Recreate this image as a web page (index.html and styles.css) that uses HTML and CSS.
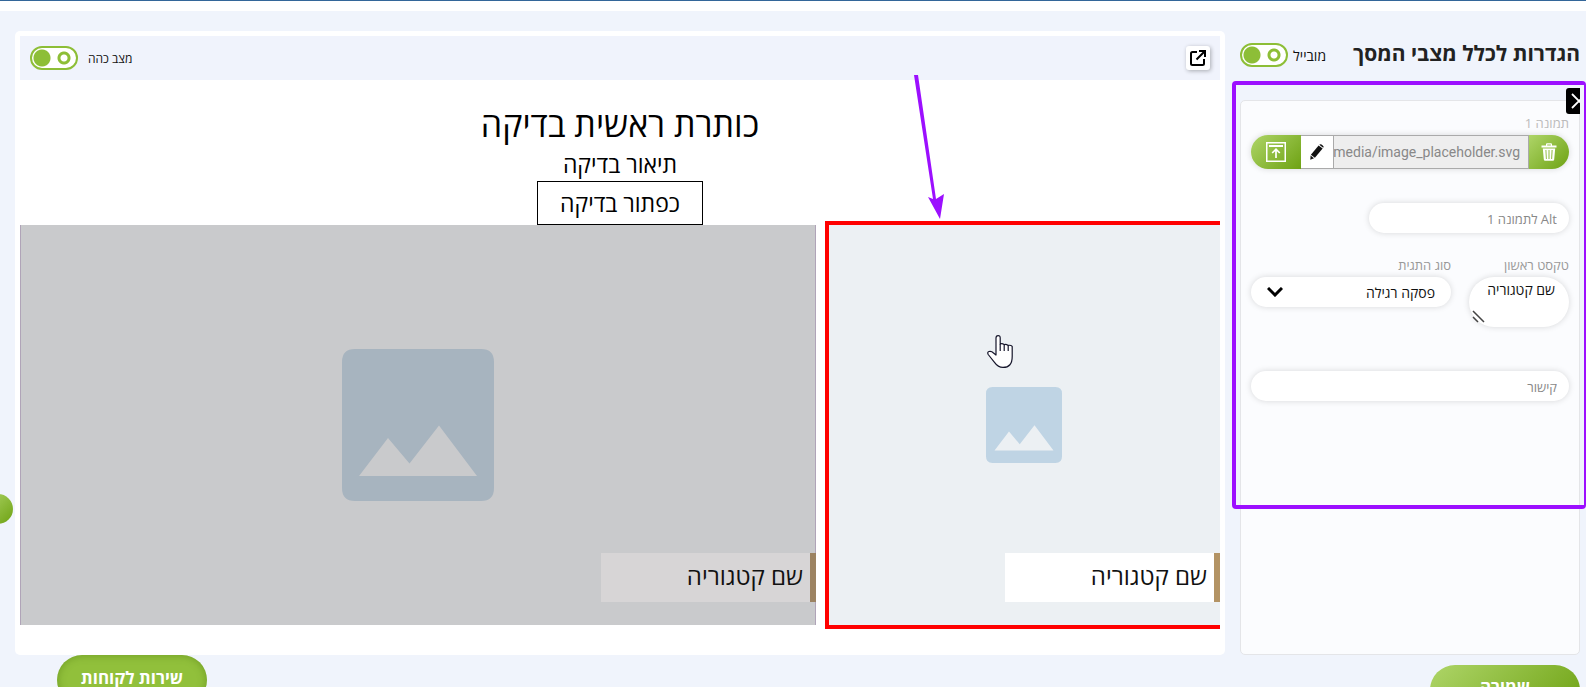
FILE: index.html
```html
<!DOCTYPE html>
<html lang="he" dir="rtl">
<head>
  <meta charset="UTF-8">
  <meta name="viewport" content="width=device-width, initial-scale=1.0">
  <title>הגדרות לכלל מצבי המסך</title>
  <link rel="stylesheet" href="styles.css">
</head>
<body>
  <div class="topbar"></div>

  <main class="editor">
    <aside class="sidebar">
      <div class="sidebar-head">
        <h1 class="title">הגדרות לכלל מצבי המסך</h1>
        <label class="switch">
          <span>מובייל</span>
          <input type="checkbox" class="toggle">
        </label>
      </div>

      <form class="panel">
        <label class="label label-light" for="image">תמונה 1</label>
        <div class="file-row">
          <button type="button" class="file-btn trash" aria-label="מחיקה">
            <svg width="16" height="18" viewBox="0 0 16 18" fill="#fff">
              <path d="M5 1.5Q5 .3 6 .3h4q1 0 1 1.2v1h4.5v2H.5v-2H5zM6.2 1.4v1.1h3.6V1.4z"/>
              <path d="M1.8 5.5h12.4l-1 11q-.1 1.2-1.3 1.2H4.1q-1.2 0-1.3-1.2zM4.4 7l.5 9h.9l-.4-9zM7.5 7v9h1V7zM10.6 7l-.4 9h.9l.5-9z" fill-rule="evenodd"/>
            </svg>
          </button>
          <input type="text" id="image" class="file-name" value="media/image_placeholder.svg" readonly>
          <button type="button" class="file-btn edit" aria-label="עריכה">
            <svg width="14" height="16" viewBox="0 0 14 16" fill="#111">
              <path d="M8.6 1.6l4 3L4.9 13.8l-4-3z"/>
              <path d="M9.3.8q.9-1.1 2.2-.2l1.5 1.2q1 .9.2 2z"/>
              <path d="M.6 11.6l3.4 2.7L.3 15.8z"/>
            </svg>
          </button>
          <button type="button" class="file-btn upload" aria-label="העלאה">
            <svg width="20" height="20" viewBox="0 0 20 20" fill="none" stroke="#fff">
              <rect x=".75" y=".75" width="18.5" height="18.5" stroke-width="1.5"/>
              <path d="M3 4h14" stroke-width="2"/>
              <path d="M10 16V7.5M6.2 11L10 7.2l3.8 3.8" stroke-width="1.7"/>
            </svg>
          </button>
        </div>

        <input type="text" class="field alt" placeholder="Alt לתמונה 1" aria-label="Alt לתמונה 1">

        <div class="columns">
          <div class="col-text">
            <label class="label" for="text">טקסט ראשון</label>
            <textarea id="text" class="field area">שם קטגוריה</textarea>
            <svg class="grip" width="13" height="13" viewBox="0 0 13 13" stroke="#444" stroke-width="1.5">
              <path d="M1 1l11 11M1 7l5 5"/>
            </svg>
          </div>
          <div class="col-tag">
            <label class="label" for="tag">סוג התגית</label>
            <div class="select-box">
              <select id="tag" class="field select">
                <option>פסקה רגילה</option>
              </select>
              <svg class="chevron" width="16" height="10" viewBox="0 0 16 10" fill="none" stroke="#000" stroke-width="3">
                <path d="M1 1l7 7 7-7"/>
              </svg>
            </div>
          </div>
        </div>

        <input type="text" class="field" placeholder="קישור" aria-label="קישור">
      </form>

      <button type="button" class="close" aria-label="סגירה">
        <svg width="9" height="16" viewBox="0 0 9 16" fill="none" stroke="#fff" stroke-width="1.8">
          <path d="M1 1l14 14M1 15L15 1"/>
        </svg>
      </button>
      <button type="button" class="save">שמירה</button>
      <div class="marker"></div>
    </aside>

    <section class="preview">
      <div class="preview-head">
        <a href="#" class="open" aria-label="פתיחה בחלון חדש">
          <svg width="16" height="16" viewBox="0 0 16 16" fill="none" stroke="#000" stroke-width="2">
            <path d="M7 2H2.500Q1 2 1 3.500v10Q1 15 2.500 15h10q1.500 0 1.500-1.500V9M9 1h6v6M15 1L6.500 9.500"/>
          </svg>
        </a>
        <label class="switch switch-small">
          <span>מצב כהה</span>
          <input type="checkbox" class="toggle">
        </label>
      </div>

      <div class="intro">
        <h2 class="intro-title">כותרת ראשית בדיקה</h2>
        <p class="intro-text">תיאור בדיקה</p>
        <a href="#" class="intro-btn">כפתור בדיקה</a>
      </div>

      <div class="slides">
        <div class="slide active">
          <svg class="placeholder" viewBox="0 0 152 152">
            <path fill="#bfd4e4" fill-rule="evenodd" d="M13 0h126q13 0 13 13v126q0 13-13 13H13q-13 0-13-13V13Q0 0 13 0zM17 127h118L97 76.500l-29.500 38L46 89z"/>
          </svg>
          <div class="caption">שם קטגוריה</div>
        </div>
        <div class="slide dimmed">
          <svg class="placeholder large" viewBox="0 0 152 152">
            <path fill="#a7b4bf" fill-rule="evenodd" d="M13 0h126q13 0 13 13v126q0 13-13 13H13q-13 0-13-13V13Q0 0 13 0zM17 127h118L97 76.500l-29.500 38L46 89z"/>
          </svg>
          <div class="caption">שם קטגוריה</div>
        </div>
      </div>

      <svg class="arrow" width="32" height="146" viewBox="0 0 32 146" fill="#9c0fff">
        <path d="M1 1h4l18 124 8-5-4 25-12-22 5 2z"/>
      </svg>
      <svg class="hand" width="27" height="33" viewBox="0 0 27 33" fill="#fff" stroke="#15152a" stroke-width="1.2" stroke-linejoin="round">
        <path d="M9 20V3q0-2.400 2.100-2.400T13.200 3v6q2-1 4 .6 2-.6 4 .8 2.500-.6 4 1v10q0 11-9.200 11-5 0-8.500-5L1.200 19.500q-1.200-2.400.8-3 2.500-.6 4.500 1.500z"/>
        <path d="M13.200 9v7M17.200 9.600v6.400M21.200 10.400V16" fill="none"/>
      </svg>
    </section>
  </main>

  <button type="button" class="bubble" aria-label="תפריט"></button>
  <a href="#" class="support">שירות לקוחות</a>
</body>
</html>
```
FILE: styles.css
```css
*{
  box-sizing: border-box;
}

body{
  margin: 0;
  height: 100vh;
  overflow: hidden;
  background-color: #f0f4fc;
  font-family: "Open Sans", "Liberation Sans", sans-serif;
  color: #222;
}

h1,
h2,
p{
  margin: 0;
  font-weight: 400;
}

a{
  text-decoration: none;
}

button,
input,
select,
textarea{
  margin: 0;
  padding: 0;
  border: 0;
  font-family: inherit;
}

svg{
  display: block;
}

.topbar{
  height: 11px;
  border-top: 1px solid #336699;
  background-color: #fff;
}

.editor{
  display: grid;
  grid-template-columns: 340px minmax(0, 1fr);
  gap: 15px;
  align-items: start;
  padding: 20px 6px 0 15px;
}

/* sidebar */
.sidebar{
  position: relative;
}

.sidebar-head{
  display: flex;
  justify-content: space-between;
  align-items: center;
  height: 48px;
  margin-bottom: 21px;
}

.title{
  font-size: 21px;
  line-height: 40px;
  font-weight: 700;
  padding-bottom: 4px;
}

.switch{
  display: flex;
  align-items: center;
  gap: 5px;
  font-size: 14px;
  color: #111;
}

.switch-small{
  gap: 10px;
  font-size: 12px;
}

.toggle{
  appearance: none;
  width: 48px;
  height: 24px;
  border: 2px solid #8dbe37;
  border-radius: 12px;
  background: radial-gradient(circle at 10px 10px, #8dbe37 8px, transparent 9px) padding-box,
              radial-gradient(circle at 32px 10px, transparent 3px, #8dbe37 4px, #8dbe37 6px, transparent 7px) padding-box,
              #fff;
}

.panel{
  height: 555px;
  padding: 10px;
  border: 1px solid #e4e5e8;
  border-radius: 5px;
  background-color: #fbfcfe;
}

.label{
  display: block;
  font-size: 13px;
  line-height: 24px;
  color: #999;
  white-space: nowrap;
}

.label-light{
  color: #bbb;
}

.file-row{
  display: flex;
  height: 34px;
  margin-bottom: 34px;
  border-radius: 17px;
  overflow: hidden;
  box-shadow: 0 0 6px rgba(0, 0, 0, .15);
}

.file-btn{
  display: flex;
  flex-shrink: 0;
  align-items: center;
  justify-content: center;
}

.trash,
.upload,
.save,
.bubble{
  background: linear-gradient(135deg, #aed568, #6ea213);
}

.trash{
  width: 40px;
}

.upload{
  width: 50px;
}

.edit{
  width: 32px;
  border: 1px solid #aaa;
  border-width: 1px 0;
  background-color: #fff;
}

.file-name{
  flex: 1;
  min-width: 0;
  padding-right: 8px;
  border: 1px solid #aaa;
  background-color: #eee;
  font-family: Roboto, sans-serif;
  font-size: 14px;
  color: #888;
}

.field{
  display: block;
  width: 100%;
  height: 30px;
  padding: 0 12px;
  border-radius: 15px;
  background-color: #fff;
  box-shadow: 0 0 6px rgba(0, 0, 0, .15);
  font-size: 14px;
  color: #111;
}

.field::placeholder{
  font-size: 13px;
  color: #888;
  opacity: 1;
}

.alt{
  width: 200px;
  margin-bottom: 20px;
}

.columns{
  display: flex;
  gap: 18px;
  margin-bottom: 44px;
}

.col-text{
  position: relative;
  flex: 1;
}

.col-tag{
  width: 200px;
}

.area{
  height: 50px;
  padding: 4px 14px;
  border-radius: 25px;
  line-height: 18px;
  resize: none;
  overflow: hidden;
}

.grip{
  position: absolute;
  left: 3px;
  bottom: 4px;
}

.select-box{
  position: relative;
}

.select{
  appearance: none;
  padding: 0 16px;
}

.chevron{
  position: absolute;
  left: 16px;
  top: 10px;
  pointer-events: none;
}

.close{
  position: absolute;
  top: 57px;
  right: 0;
  width: 14px;
  height: 26px;
  border-radius: 3px 0 0 3px;
  background-color: #000;
  overflow: hidden;
}

.save{
  display: block;
  width: 150px;
  height: 50px;
  margin-top: 10px;
  padding-bottom: 8px;
  border-radius: 25px;
  font-size: 17px;
  font-weight: 700;
  color: #fff;
}

.marker{
  position: absolute;
  top: 50px;
  left: -8px;
  right: -6px;
  height: 428px;
  border: 4px solid #9c0fff;
  border-right-width: 2px;
  border-radius: 4px;
  pointer-events: none;
}

/* preview */
.preview{
  position: relative;
  padding: 5px 5px 30px;
  border-radius: 5px;
  background-color: #fff;
}

.preview-head{
  display: flex;
  justify-content: space-between;
  align-items: center;
  height: 44px;
  padding: 0 10px;
  background-color: #f0f3fc;
}

.open{
  display: flex;
  align-items: center;
  justify-content: center;
  width: 24px;
  height: 24px;
  border-radius: 3px;
  background-color: #fff;
  box-shadow: 1px 1px 4px rgba(0, 0, 0, .3);
}

.intro{
  display: flex;
  flex-direction: column;
  align-items: center;
  padding-top: 20px;
  color: #000;
}

.intro-title{
  font-size: 34px;
  line-height: 48px;
}

.intro-text,
.intro-btn{
  font-size: 23px;
}

.intro-text{
  line-height: 33px;
}

.intro-btn{
  padding: 0 22px;
  border: 1px solid #000;
  line-height: 42px;
  color: #000;
}

.slides{
  display: grid;
  grid-template-columns: minmax(0, 1fr) 66.33%;
  gap: 9px;
}

.slide{
  position: relative;
  display: flex;
  align-items: center;
  justify-content: center;
  height: 400px;
}

.active{
  margin: -4px 0;
  height: 408px;
  border: 4px solid #f00;
  border-right: 0;
  background-color: #ecf0f3;
}

.dimmed{
  border: 1px solid #b0a4b8;
  border-width: 0 1px;
  background-color: #c9cacc;
}

.placeholder{
  width: 76px;
}

.large{
  width: 152px;
}

.caption{
  position: absolute;
  right: 0;
  bottom: 23px;
  width: 215px;
  padding: 0 7px 4px;
  border-right: 6px solid #b39364;
  background-color: #fff;
  font-size: 24px;
  line-height: 45px;
  color: #111;
}

.dimmed .caption{
  right: -1px;
  border-color: #9c8362;
  background-color: #d7d5d6;
}

.arrow{
  position: absolute;
  top: 43px;
  right: 280px;
}

.hand{
  position: absolute;
  top: 304px;
  right: 211px;
}

/* floating buttons */
.bubble{
  position: fixed;
  top: 494px;
  left: -17px;
  width: 30px;
  height: 30px;
  border-radius: 50%;
}

.support{
  position: fixed;
  bottom: -18px;
  left: 57px;
  width: 150px;
  height: 50px;
  border-radius: 25px;
  background-color: #91c03b;
  box-shadow: inset 0 0 8px rgba(60, 100, 0, .4);
  font-size: 17px;
  line-height: 46px;
  font-weight: 700;
  text-align: center;
  color: #fff;
}
```
